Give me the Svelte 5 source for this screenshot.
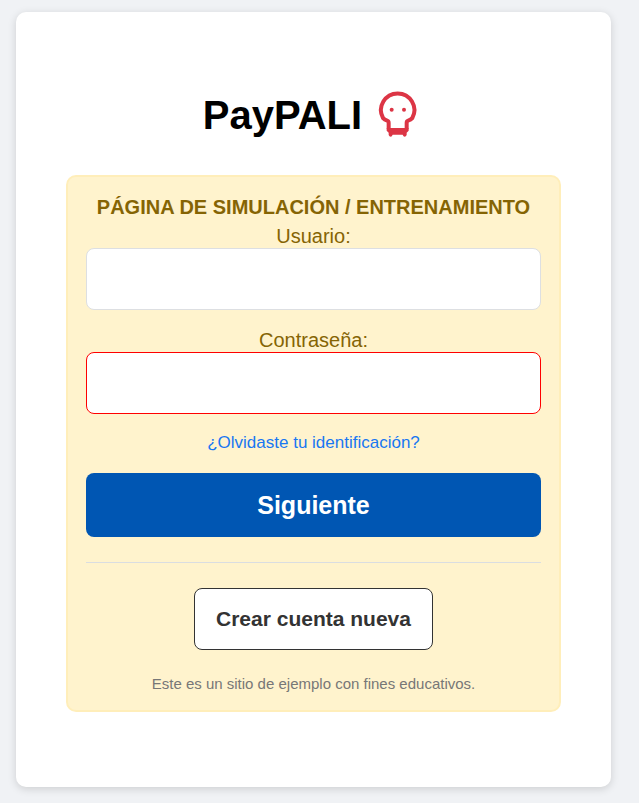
<script lang="ts">
  let user = $state('');
  let password = $state('');
  let passwordError = $state(true);

  // Training page: nothing that is typed here leaves the form
  function handleSubmit(event: SubmitEvent) {
    event.preventDefault();
    passwordError = password === '';
  }
</script>

<main class="card">
  <h1>
    PayPALI
    <svg class="skull" viewBox="-6 0 168 168" fill="none" aria-hidden="true">
      <path
        d="M56 131V113Q56 108 50 106Q44 104 39 99A50 50 0 1 1 127 99Q122 104 116 106Q110 108 110 113V131"
        stroke="#dc3545"
        stroke-width="12"
        stroke-linejoin="round"
      />
      <path
        d="M50 129H116V137L110 143V150Q108 155 104 155Q100 155 98 149H68Q66 155 62 155Q58 155 56 150V143L50 137Z"
        fill="#dc3545"
      />
      <circle cx="65" cy="74" r="6" fill="#dc3545" />
      <circle cx="102" cy="74" r="6" fill="#dc3545" />
    </svg>
  </h1>

  <form class="notice" onsubmit={handleSubmit} novalidate>
    <strong class="notice-title">PÁGINA DE SIMULACIÓN / ENTRENAMIENTO</strong>

    <div class="field">
      <label for="user">Usuario:</label>
      <input id="user" type="text" autocomplete="off" bind:value={user} />
    </div>

    <div class="field">
      <label for="password">Contraseña:</label>
      <input
        id="password"
        type="password"
        autocomplete="off"
        class:error={passwordError}
        bind:value={password}
      />
    </div>

    <a class="forgot" href="#recuperar">¿Olvidaste tu identificación?</a>

    <button class="btn-primary" type="submit">Siguiente</button>

    <hr />

    <button class="btn-outline" type="button">Crear cuenta nueva</button>

    <p class="footnote">Este es un sitio de ejemplo con fines educativos.</p>
  </form>
</main>

<style>
  :global(body) {
    background: #f0f2f5;
    font-family: Arial, 'Liberation Sans', sans-serif;
  }

  .card {
    margin: 12px 28px 16px 16px;
    padding: 73px 50px 75px;
    background: #fff;
    border-radius: 10px;
    box-shadow: 0 2px 8px rgba(0, 0, 0, 0.15);
  }

  h1 {
    display: flex;
    align-items: flex-start;
    justify-content: center;
    gap: 6px;
    margin: 0 0 30px;
    color: #000;
    font-size: 40px;
    line-height: 60px;
  }

  .skull {
    width: 56px;
    height: 56px;
  }

  .notice {
    display: flex;
    flex-direction: column;
    align-items: center;
    padding: 18px;
    background: #fff3cd;
    border: 2px solid #ffeeba;
    border-radius: 10px;
    color: #856404;
    font-size: 20px;
    line-height: 24px;
    text-align: center;
  }

  .notice-title {
    margin-bottom: 5px;
  }

  .field {
    width: 100%;
    margin-bottom: 18px;
  }

  label {
    display: block;
  }

  input {
    display: block;
    box-sizing: border-box;
    width: 100%;
    height: 62px;
    padding: 18px;
    background: #fff;
    border: 1px solid #dddfe2;
    border-radius: 8px;
    font: inherit;
  }

  input.error {
    border-color: #f00;
  }

  .forgot {
    color: #1877f2;
    font-size: 17px;
    line-height: 22px;
    text-decoration: none;
  }

  button {
    height: 62px;
    border-radius: 8px;
    font-family: inherit;
    font-weight: bold;
    cursor: pointer;
  }

  .btn-primary {
    width: 100%;
    height: 64px;
    margin-top: 19px;
    background: #0056b3;
    border: none;
    color: #fff;
    font-size: 25px;
  }

  hr {
    width: 100%;
    margin: 25px 0;
    border: none;
    border-top: 1px solid #dadde1;
  }

  .btn-outline {
    padding: 0 21px;
    background: #fff;
    border: 1px solid #333;
    color: #333;
    font-size: 21px;
  }

  .footnote {
    margin: 25px 0 0;
    color: #777;
    font-size: 15px;
    line-height: 17px;
  }
</style>
